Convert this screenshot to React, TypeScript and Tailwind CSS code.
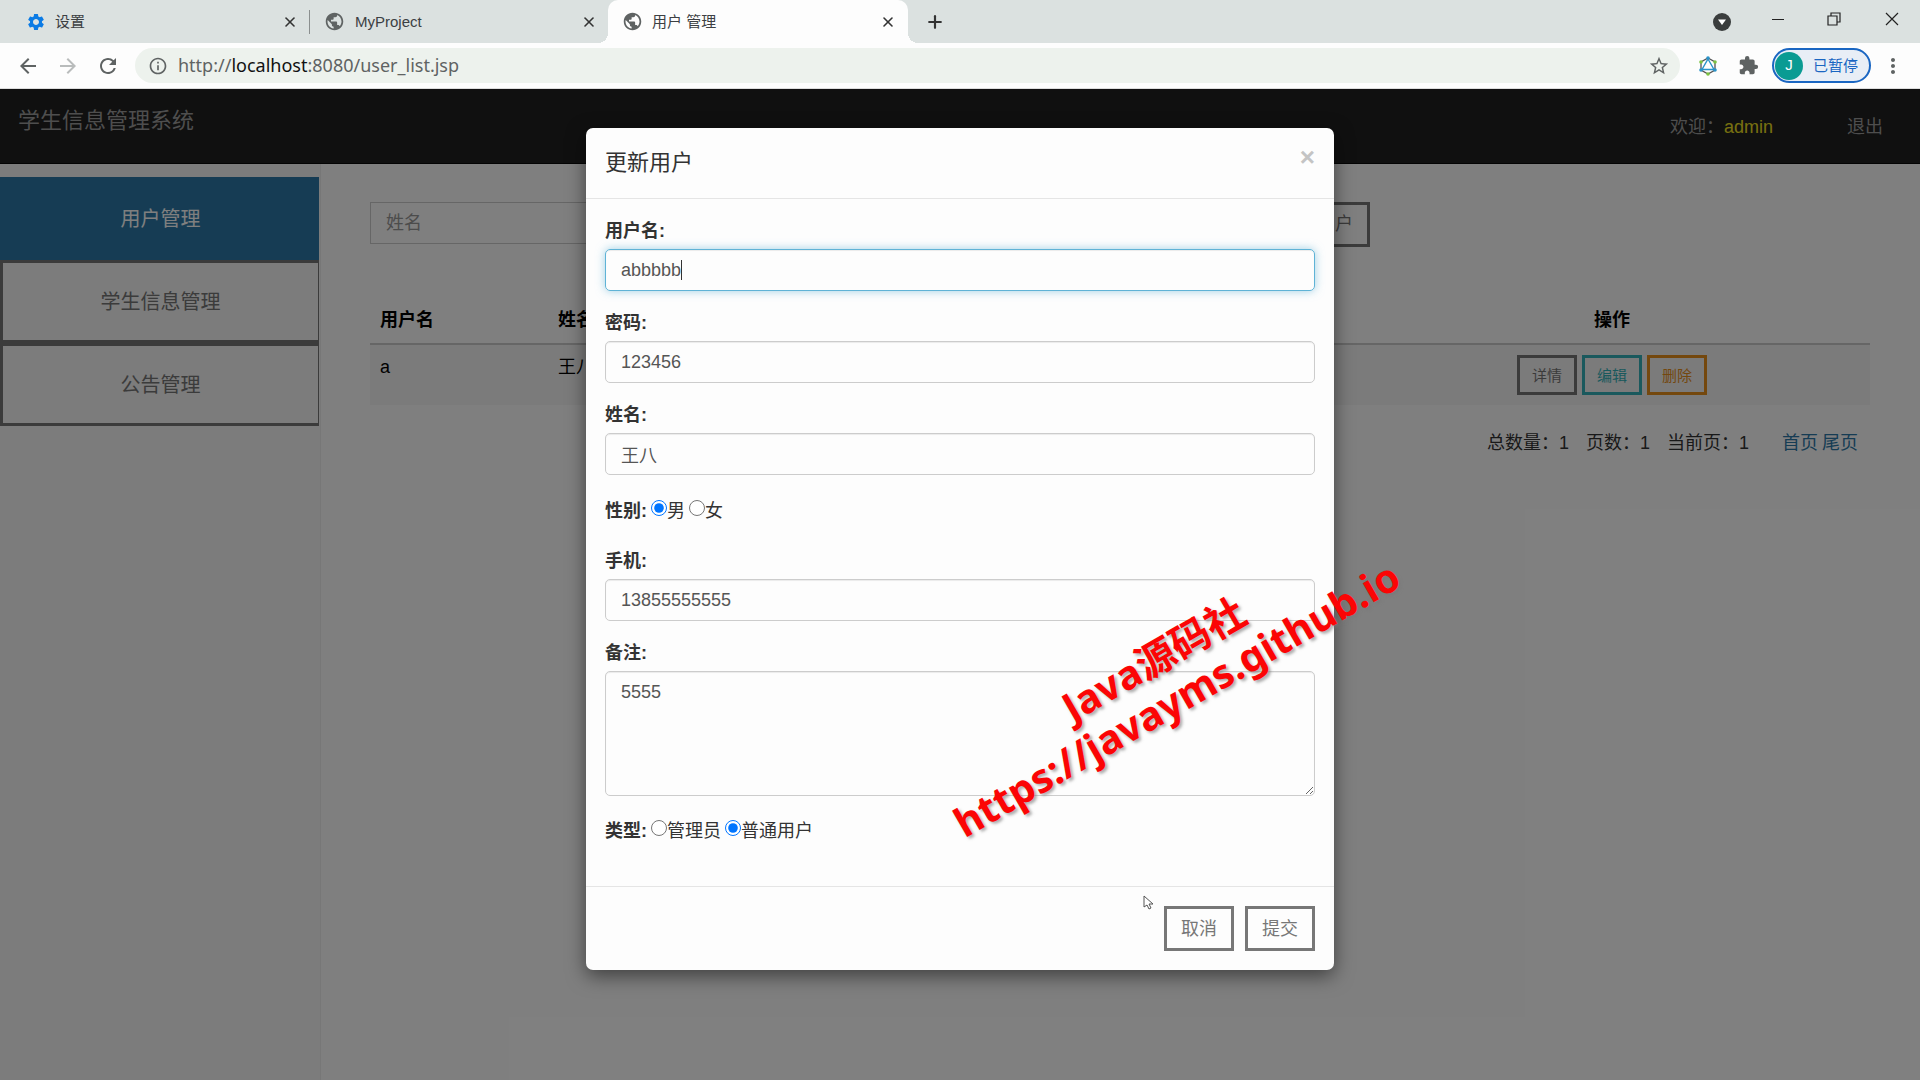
import React from 'react';
import { Plus, X } from 'lucide-react';
import {
  MdArrowBack,
  MdArrowForward,
  MdExtension,
  MdInfoOutline,
  MdMoreVert,
  MdPublic,
  MdRefresh,
  MdSettings,
  MdStarOutline,
} from 'react-icons/md';

const labelClass = 'block text-[18px] leading-[27px] mb-[4px] font-bold';
const inputClass =
  'block w-full h-[42px] px-[15px] text-[18px] text-[#555] bg-transparent border border-[#ccc] rounded-[5px] outline-none shadow-[inset_0_1px_1px_rgba(0,0,0,0.075)]';

const menus = [
  { name: '用户管理', active: true },
  { name: '学生信息管理', active: false },
  { name: '公告管理', active: false },
];

const CloseTab: React.FC<{ label: string }> = ({ label }) => (
  <button aria-label={label} className="flex items-center justify-center w-4 h-4 text-[#333]">
    <X className="w-4 h-4" strokeWidth={2.4} />
  </button>
);

const BrowserTabs: React.FC = () => (
  <div className="flex items-center h-[43px] bg-[#dbe1e0] text-[15px] text-[#3c4043]">
    <div className="flex items-center w-[310px] h-[24px] pl-[26px] pr-[11px] border-r border-[#8b8f8f]">
      <MdSettings className="w-[20px] h-[20px] text-[#0b7be5]" />
      <span className="ml-[9px] pt-[2px] flex-1">设置</span>
      <CloseTab label="关闭设置" />
    </div>
    <div className="flex items-center w-[298px] pl-[14px] pr-[11px]">
      <MdPublic className="w-[21px] h-[21px] text-[#5f6363]" />
      <span className="ml-[10px] pt-[2px] flex-1">MyProject</span>
      <CloseTab label="关闭 MyProject" />
    </div>
    <div className="relative flex items-center self-stretch w-[300px] pl-[14px] pr-[12px] bg-[#fdfdfd] rounded-t-[10px]">
      <span className="absolute bottom-0 -left-[10px] w-[10px] h-[10px] bg-[radial-gradient(circle_at_0_0,transparent_10px,#fdfdfd_10px)]" />
      <span className="absolute bottom-0 -right-[10px] w-[10px] h-[10px] bg-[radial-gradient(circle_at_100%_0,transparent_10px,#fdfdfd_10px)]" />
      <MdPublic className="w-[21px] h-[21px] text-[#5f6363]" />
      <span className="ml-[9px] pt-[2px] flex-1">用户 管理</span>
      <CloseTab label="关闭用户管理" />
    </div>
    <button aria-label="新标签页" className="ml-[17px] text-[#333]">
      <Plus className="w-5 h-5" strokeWidth={2.6} />
    </button>
    <div className="flex items-center ml-auto pr-[21px] text-[#222]">
      <button aria-label="搜索标签页" className="mr-[40px]">
        <svg className="w-[18px] h-[18px]" viewBox="0 0 18 18">
          <circle cx="9" cy="9" r="9" fill="#3a3d3d" />
          <path d="M5 6.5h8L9 12z" fill="#fff" />
        </svg>
      </button>
      <button aria-label="最小化" className="mr-[42px] pb-[6px]">
        <svg className="w-[14px] h-[14px]" viewBox="0 0 14 14" stroke="currentColor">
          <path d="M1 7.5h12" />
        </svg>
      </button>
      <button aria-label="还原" className="mr-[44px] pb-[6px]">
        <svg className="w-[14px] h-[14px]" viewBox="0 0 14 14" fill="none" stroke="currentColor" strokeWidth="1.2">
          <path d="M1 4h9v9H1zM4 4V1h9v9h-3" />
        </svg>
      </button>
      <button aria-label="关闭" className="pb-[6px]">
        <svg className="w-[14px] h-[14px]" viewBox="0 0 14 14" stroke="currentColor" strokeWidth="1.2">
          <path d="M1 1l12 12M13 1L1 13" />
        </svg>
      </button>
    </div>
  </div>
);

const AddressBar: React.FC = () => (
  <div className="flex items-center h-[46px] pl-[16px] pr-[15px] bg-[#fdfdfd] border-b border-[#ddd] text-[#5f6363]">
    <button aria-label="后退" className="mr-[16px]">
      <MdArrowBack className="w-6 h-6" />
    </button>
    <button aria-label="前进" className="mr-[16px] text-[#b9bcbc]">
      <MdArrowForward className="w-6 h-6" />
    </button>
    <button aria-label="重新加载" className="mr-[15px]">
      <MdRefresh className="w-6 h-6" />
    </button>
    <div className="flex items-center flex-1 h-[35px] pl-[13px] pr-[10px] rounded-full bg-[#edf2ed]">
      <MdInfoOutline className="w-5 h-5" />
      <div className="ml-[10px] flex-1 text-[18px] font-['Noto_Sans','Noto_Sans_CJK_SC',sans-serif]">
        http://<span className="text-[#111]">localhost</span>:8080/user_list.jsp
      </div>
      <button aria-label="收藏">
        <MdStarOutline className="w-[22px] h-[22px]" />
      </button>
    </div>
    <svg className="w-[20px] h-[20px] ml-[18px]" viewBox="0 0 20 20" fill="none">
      <path d="M10 2l7 4v8l-7 4-7-4V6z" stroke="#555" strokeWidth="1.3" />
      <path d="M10 3l6 10.500H4z" stroke="#2a93c9" strokeWidth="1.4" />
      <circle cx="10" cy="2" r="1.800" fill="#2a93c9" />
      <circle cx="17" cy="14" r="1.800" fill="#2a93c9" />
      <circle cx="3" cy="14" r="1.800" fill="#2a93c9" />
      <circle cx="17" cy="6" r="1.800" fill="#7cc242" />
      <circle cx="3" cy="6" r="1.800" fill="#7cc242" />
      <circle cx="10" cy="18" r="1.800" fill="#7cc242" />
    </svg>
    <button aria-label="扩展程序" className="ml-[20px]">
      <MdExtension className="w-[21px] h-[21px]" />
    </button>
    <button className="flex items-center h-[35px] ml-[13px] pl-[1px] pr-[11px] rounded-full border-2 border-[#1a66c2] bg-[#e8eef6] text-[15px] text-[#1a66c2]">
      <span className="flex items-center justify-center w-[28px] h-[28px] mr-[10px] rounded-full bg-[#0a9b93] text-white">J</span>
      <span className="pt-[2px]">已暂停</span>
    </button>
    <button aria-label="菜单" className="ml-[10px]">
      <MdMoreVert className="w-6 h-6" />
    </button>
  </div>
);

const UserTable: React.FC = () => (
  <table className="w-full mt-[51px] table-fixed text-[18px] leading-[25px] text-black">
    <thead>
      <tr className="border-b-2 border-[#ccc]">
        <th className="w-[178px] p-[10px] text-left">用户名</th>
        <th className="p-[10px] text-left">姓名</th>
        <th className="w-[516px] p-[10px] text-center">操作</th>
      </tr>
    </thead>
    <tbody>
      <tr className="bg-[#f6f6f6] align-top">
        <td className="p-[10px]">a</td>
        <td className="p-[10px]">王八</td>
        <td className="p-[10px]">
          <div className="flex justify-center gap-[5px] text-[15px]">
            <button className="w-[60px] h-[40px] border-[3px] border-[#777] text-[#777]">详情</button>
            <button className="w-[60px] h-[40px] border-[3px] border-[#35b3ba] text-[#35b3ba]">编辑</button>
            <button className="w-[60px] h-[40px] border-[3px] border-[#e8901c] text-[#e8901c]">删除</button>
          </div>
        </td>
      </tr>
    </tbody>
  </table>
);

const UpdateUserModal: React.FC = () => (
  <div
    role="dialog"
    aria-labelledby="modal-title"
    className="w-[748px] rounded-[7px] bg-[#fdfdfd] text-[#333] shadow-[0_6px_19px_rgba(0,0,0,0.5)]"
  >
    <div className="flex justify-between h-[71px] px-[19px] pt-[19px] border-b border-[#e5e5e5]">
      <h4 id="modal-title" className="text-[22px] leading-[32px]">更新用户</h4>
      <button aria-label="关闭" className="self-start text-[26px] leading-[20px] font-bold text-[#c4c4c4]">×</button>
    </div>

    <form className="px-[19px] pt-[19px] h-[687px] text-[18px]">
      <div className="mb-[19px]">
        <label htmlFor="username" className={labelClass}>用户名:</label>
        <div className="relative">
          <input
            id="username"
            defaultValue="abbbbb"
            className="block w-full h-[42px] px-[15px] text-[18px] text-[#555] bg-transparent border border-[#5fb3d6] rounded-[5px] outline-none shadow-[inset_0_1px_1px_rgba(0,0,0,0.075),0_0_10px_rgba(95,179,214,0.6)]"
          />
          {/* Text caret */}
          <span className="absolute left-[76px] top-[11px] w-px h-[20px] bg-[#333]" />
        </div>
      </div>
      <div className="mb-[19px]">
        <label htmlFor="password" className={labelClass}>密码:</label>
        <input id="password" defaultValue="123456" className={inputClass} />
      </div>
      <div className="mb-[19px]">
        <label htmlFor="name" className={labelClass}>姓名:</label>
        <input id="name" defaultValue="王八" className={inputClass} />
      </div>
      <div role="group" aria-label="性别" className="flex items-center h-[34px] mb-[20px]">
        <span className="mr-[4px] font-bold">性别:</span>
        <input type="radio" id="male" name="gender" defaultChecked className="w-[16px] h-[16px] mb-[6px] accent-[#0075ff]" />
        <label htmlFor="male" className="mr-[4px]">男</label>
        <input type="radio" id="female" name="gender" className="w-[16px] h-[16px] mb-[6px]" />
        <label htmlFor="female">女</label>
      </div>
      <div className="mb-[19px]">
        <label htmlFor="phone" className={labelClass}>手机:</label>
        <input id="phone" defaultValue="13855555555" className={inputClass} />
      </div>
      <div className="mb-[19px]">
        <label htmlFor="remark" className={labelClass}>备注:</label>
        <textarea
          id="remark"
          defaultValue="5555"
          className="block w-full h-[125px] px-[15px] py-[8px] text-[18px] leading-[25px] text-[#555] bg-transparent border border-[#ccc] rounded-[5px] outline-none shadow-[inset_0_1px_1px_rgba(0,0,0,0.075)]"
        />
      </div>
      <div role="group" aria-label="类型" className="flex items-center h-[32px]">
        <span className="mr-[4px] font-bold">类型:</span>
        <input type="radio" id="admin" name="type" className="w-[16px] h-[16px] mb-[6px]" />
        <label htmlFor="admin" className="mr-[4px]">管理员</label>
        <input type="radio" id="normal" name="type" defaultChecked className="w-[16px] h-[16px] mb-[6px] accent-[#0075ff]" />
        <label htmlFor="normal">普通用户</label>
      </div>
    </form>

    <div className="flex justify-end gap-[11px] p-[19px] border-t border-[#e5e5e5] text-[18px] text-[#777]">
      <button className="w-[70px] h-[45px] pt-[2px] border-[3px] border-[#777]">取消</button>
      <button className="w-[70px] h-[45px] pt-[2px] border-[3px] border-[#777]">提交</button>
    </div>
  </div>
);

const App: React.FC = () => {
  return (
    <div className="flex flex-col h-screen overflow-hidden font-['Liberation_Sans','Noto_Sans_CJK_SC',sans-serif]">
      <BrowserTabs />
      <AddressBar />

      <div className="relative flex flex-col flex-1 bg-white">
        {/* Navbar */}
        <header className="flex justify-between h-[75px] pl-[18px] pr-[37px] bg-[#202020] border-b border-[#080808] text-[#9d9d9d]">
          <h1 className="pt-[16px] text-[22px] leading-[32px]">学生信息管理系统</h1>
          <div className="flex items-center gap-[74px] pt-[2px] text-[18px]">
            <span>
              欢迎：<span className="text-[#f0e020]">admin</span>
            </span>
            <a href="#logout">退出</a>
          </div>
        </header>

        <div className="flex flex-1">
          {/* Sidebar */}
          <nav className="w-[321px] pt-[13px] pr-px bg-[#f8f8f8] border-r border-[#eee]">
            {menus.map((menu) => (
              <button
                key={menu.name}
                className={`block w-full h-[83px] border-[3px] border-r text-[20px] ${
                  menu.active ? 'bg-[#2c79a8] border-[#2c79a8] text-white' : 'border-[#777] text-[#777]'
                }`}
              >
                {menu.name}
              </button>
            ))}
          </nav>

          <main className="flex-1 pt-[38px] pl-[49px] pr-[50px]">
            <div className="flex w-2/3 gap-4">
              <input
                aria-label="姓名"
                placeholder="姓名"
                className="flex-1 h-[42px] px-[15px] text-[18px] bg-transparent border border-[#ccc] placeholder:text-[#999]"
              />
              <button className="h-[45px] px-[14px] border-[3px] border-[#777] text-[18px] text-[#777]">添加用户</button>
            </div>

            <UserTable />

            <div className="flex justify-end mt-[26px] pr-[12px] text-[18px] leading-[25px] text-[#333]">
              <span className="mr-[17px]">总数量：1</span>
              <span className="mr-[17px]">页数：1</span>
              <span className="mr-[33px]">当前页：1</span>
              <a href="#first" className="mr-[4px] text-[#2c79a8]">首页</a>
              <a href="#last" className="text-[#2c79a8]">尾页</a>
            </div>
          </main>
        </div>

        {/* Backdrop and dialog */}
        <div className="absolute inset-0 flex items-start justify-center pt-[39px] bg-black/50">
          <UpdateUserModal />
        </div>

        {/* Watermark */}
        <p className="absolute left-[1165px] top-[590px] -translate-x-1/2 -translate-y-1/2 -rotate-30 text-center text-[40px] leading-[46px] font-bold whitespace-nowrap text-[#fb0505] font-['Noto_Sans','Noto_Sans_CJK_SC',sans-serif] [text-shadow:1px_3px_3px_rgba(120,120,120,0.6)] pointer-events-none">
          Java源码社
          <br />
          https://javayms.github.io
        </p>

        {/* Pointer */}
        <svg className="absolute left-[1143px] top-[806px] w-[12px] h-[16px]" viewBox="0 0 12 16" fill="#fff" stroke="#555">
          <path d="M1 1v11l3-2 2 4 2-1-2-4h4z" />
        </svg>
      </div>
    </div>
  );
};

export default App;
